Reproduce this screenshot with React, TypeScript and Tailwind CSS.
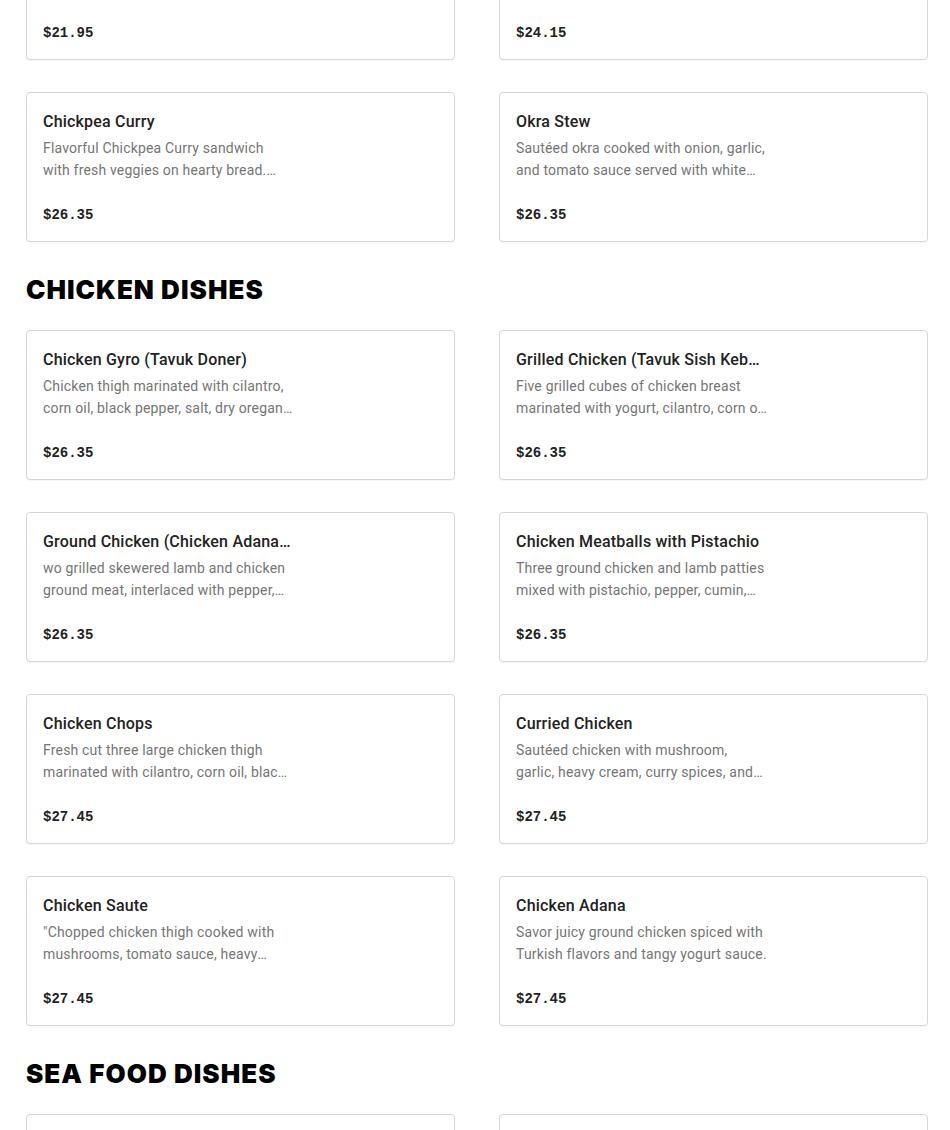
import React from 'react';

type Dish = {
  name: string;
  description: string;
  price: string;
};

const topDishes: Dish[] = [
  { name: 'Veggie Plate', description: 'Seasonal vegetables grilled with olive oil and herbs, served with rice.', price: '$21.95' },
  { name: 'Lentil Kofte', description: 'Red lentil patties with bulgur, onion, parsley and spices.', price: '$24.15' },
  { name: 'Chickpea Curry', description: 'Flavorful Chickpea Curry sandwich with fresh veggies on hearty bread. Served with a side salad.', price: '$26.35' },
  { name: 'Okra Stew', description: 'Sautéed okra cooked with onion, garlic, and tomato sauce served with white rice and salad.', price: '$26.35' },
];

const chickenDishes: Dish[] = [
  { name: 'Chicken Gyro (Tavuk Doner)', description: 'Chicken thigh marinated with cilantro, corn oil, black pepper, salt, dry oregano and garlic.', price: '$26.35' },
  { name: 'Grilled Chicken (Tavuk Sish Kebab)', description: 'Five grilled cubes of chicken breast marinated with yogurt, cilantro, corn oil and spices.', price: '$26.35' },
  { name: 'Ground Chicken (Chicken Adana Kebab)', description: 'wo grilled skewered lamb and chicken ground meat, interlaced with pepper, onion and spices.', price: '$26.35' },
  { name: 'Chicken Meatballs with Pistachio', description: 'Three ground chicken and lamb patties mixed with pistachio, pepper, cumin, and onion.', price: '$26.35' },
  { name: 'Chicken Chops', description: 'Fresh cut three large chicken thigh marinated with cilantro, corn oil, black pepper and salt.', price: '$27.45' },
  { name: 'Curried Chicken', description: 'Sautéed chicken with mushroom, garlic, heavy cream, curry spices, and served with rice.', price: '$27.45' },
  { name: 'Chicken Saute', description: '"Chopped chicken thigh cooked with mushrooms, tomato sauce, heavy cream and spices."', price: '$27.45' },
  { name: 'Chicken Adana', description: 'Savor juicy ground chicken spiced with Turkish flavors and tangy yogurt sauce.', price: '$27.45' },
];

const seaFoodDishes: Dish[] = [
  { name: 'Grilled Salmon', description: 'Fresh salmon fillet grilled and served with rice and salad.', price: '$29.65' },
  { name: 'Fried Calamari', description: 'Crispy calamari rings served with tarator sauce.', price: '$24.15' },
];

function DishCard({ dish }: { dish: Dish }) {
  return (
    <div className="h-[150px] rounded-[4px] border border-[#d6d6d6] bg-white px-4 pt-4 pb-4 flex flex-col shadow-[0_1px_1px_rgba(0,0,0,0.04)]">
      <div className="w-[251px]">
        <h3 className="w-[250px] truncate text-[16px] leading-6 pt-px font-medium tracking-[0.2px] text-[#222222]">{dish.name}</h3>
        <p className="mt-[3px] line-clamp-2 text-[14px] leading-[22px] tracking-[0.18px] text-[#757575]">{dish.description}</p>
      </div>
      <div className="mt-auto font-['Liberation_Mono',monospace] text-[14px] leading-5 font-bold text-[#222222]">
        {dish.price}
      </div>
    </div>
  );
}

function DishGrid({ dishes }: { dishes: Dish[] }) {
  return (
    <div className="grid grid-cols-2 gap-x-[44px] gap-y-8">
      {dishes.map((dish) => (
        <DishCard key={dish.name} dish={dish} />
      ))}
    </div>
  );
}

function SectionTitle({ children }: { children: React.ReactNode }) {
  return (
    <h2 className="mt-[31px] mb-[23px] font-['Inter',sans-serif] text-[26px] leading-[34px] font-black uppercase tracking-[0.04em] text-black">
      {children}
    </h2>
  );
}

export default function App() {
  return (
    <div className="min-h-screen overflow-hidden bg-white pl-[26px] pr-[22px] font-['Roboto','Noto_Sans',sans-serif]">
      <div className="-mt-[90px]">
        <DishGrid dishes={topDishes} />
      </div>

      <SectionTitle>Chicken Dishes</SectionTitle>
      <DishGrid dishes={chickenDishes} />

      <SectionTitle>Sea Food Dishes</SectionTitle>
      <DishGrid dishes={seaFoodDishes} />
    </div>
  );
}
